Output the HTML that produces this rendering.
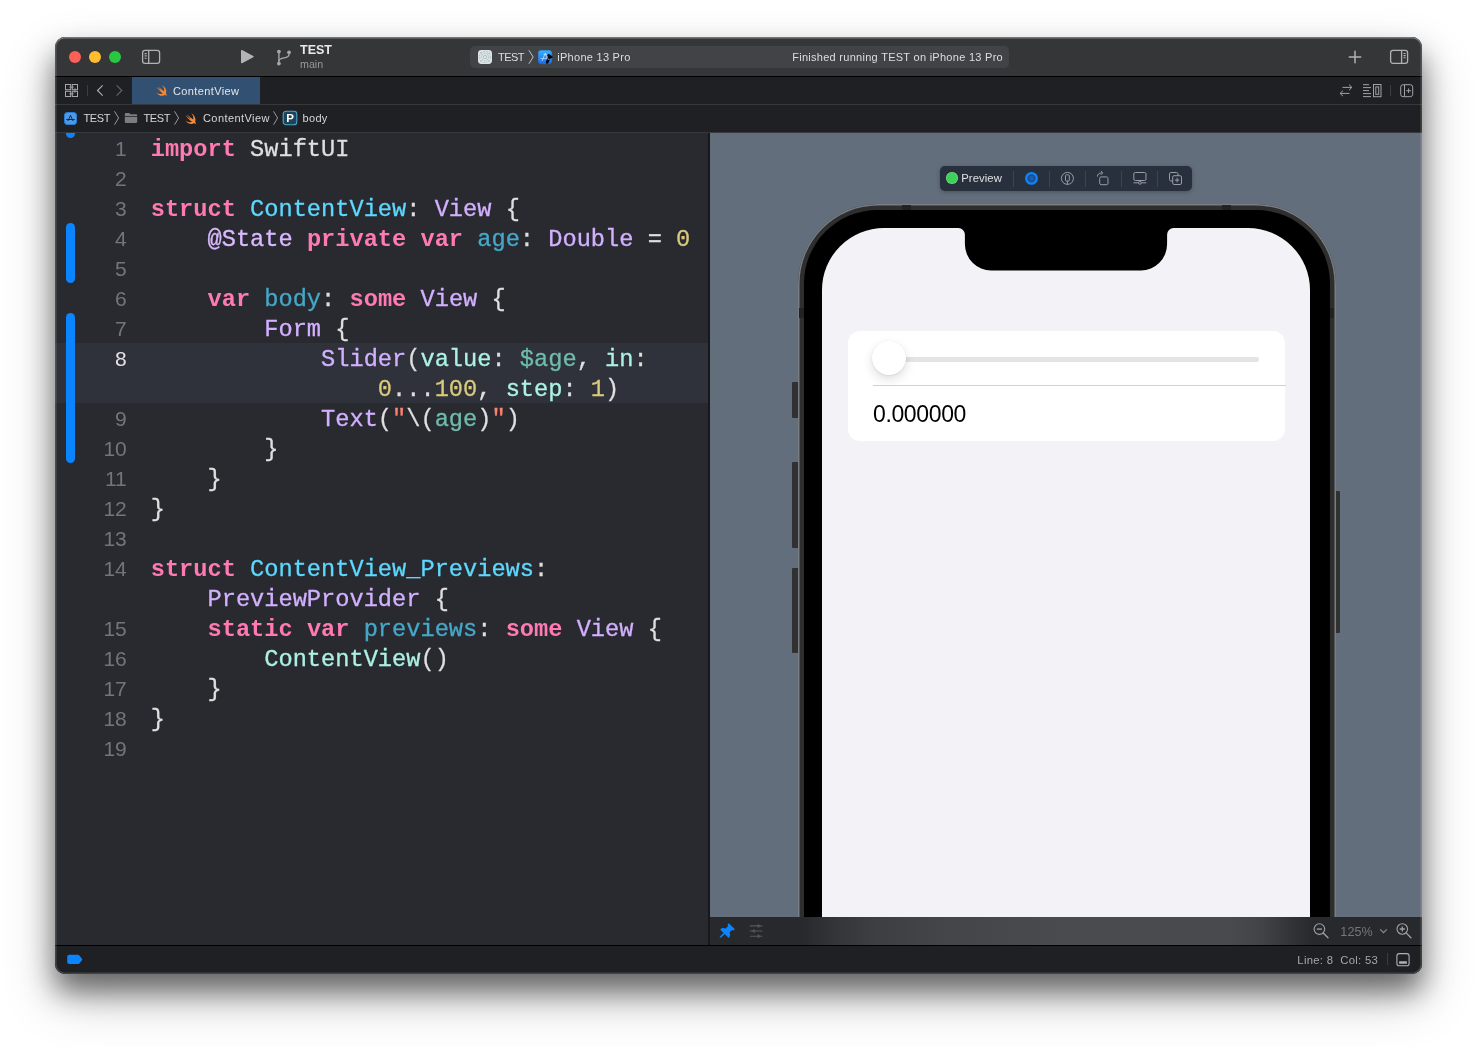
<!DOCTYPE html>
<html lang="en">
<head>
<meta charset="utf-8">
<title>Xcode – ContentView.swift</title>
<style>
*{box-sizing:border-box;margin:0;padding:0}
html,body{width:1478px;height:1047px;overflow:hidden;background:#fff}
body{position:relative;font-family:"Liberation Sans",sans-serif;-webkit-font-smoothing:antialiased}
.abs{position:absolute}
#shadow{position:absolute;left:55px;top:37.200px;width:1367.400px;height:936.300px;border-radius:10px;
  box-shadow:0 18px 28px rgba(0,0,0,.5),0 24px 54px rgba(0,0,0,.23)}
#win{position:absolute;left:55px;top:37px;width:1367.400px;height:936.500px;border-radius:10px;overflow:hidden;background:#292a30}
#pg{position:absolute;left:-55px;top:-37px;width:1478px;height:1047px;will-change:transform}
#winedge{position:absolute;inset:0;border-radius:10px;box-shadow:inset 0 0 0 1.600px rgba(255,255,255,.16),inset 0 1.500px 0 rgba(255,255,255,.2);pointer-events:none}
.t{white-space:nowrap}
.cr{top:110.5px;font-size:11px;color:#d6d6d8;line-height:15px}
#code{left:55px;top:134.500px;width:653px;font-family:"Liberation Mono",monospace;font-size:23.67px;line-height:30px;color:#dfdfe0}
.row{height:30px;white-space:pre;position:relative}
.ln{position:absolute;left:0;width:71.800px;text-align:right;font-family:"Liberation Sans",sans-serif;font-size:21px;color:#73757c;top:-1px}
.ln.cur{color:#e4e4e6}
.cd{position:absolute;left:95.700px;top:0;-webkit-text-stroke:.3px}
.cd .k{-webkit-text-stroke:0}
.k{color:#ff7ab2;font-weight:bold}.ty{color:#d3b0ff}.at{color:#dabaff}.d{color:#5dd8ff}.v{color:#45a8c8}.n{color:#d9c97c}.a{color:#acf2e4}.i{color:#6fbcab}.s{color:#ff8170}.c{color:#acf2e4}
.bar{left:11px;width:9px;border-radius:4.500px;background:#0a84ff}
#phone{left:0;top:0;width:712px;height:784px}
.ant{background:#222223}
.btn{background:#313132;border-radius:1px}
#frame{left:87.700px;top:70.500px;width:537.900px;height:1100px;border-radius:80px;background:#2e2e2f;box-shadow:inset 0 0 0 1.500px #797c80}
#bezel{left:94.300px;top:77px;width:525.300px;height:1090px;border-radius:73.500px;background:#000}
#screen{left:112.400px;top:95.200px;width:487.700px;height:1055px;border-radius:62px;background:#f2f2f7;overflow:hidden}
#card{left:25.200px;top:102.700px;width:437.400px;height:109.800px;border-radius:12px;background:#fff}
.tl{top:51px;width:12px;height:12px;border-radius:50%}
#toolbar{left:55px;top:37px;width:1368px;height:39px;background:#353638}
#tbline{left:55px;top:76px;width:1368px;height:1px;background:#000}
#tabbar{left:55px;top:77px;width:1368px;height:27px;background:#1f2023}
#tabline{left:55px;top:104px;width:1368px;height:1px;background:#37383b}
#crumbs{left:55px;top:105px;width:1368px;height:27px;background:#1f2023}
#crumbline{left:55px;top:132px;width:1368px;height:1px;background:#38393c}
#editor{left:55px;top:133px;width:653px;height:812px;background:#292a30}
#divider{left:708px;top:133px;width:2px;height:812px;background:#17181a}
#preview{left:710px;top:133px;width:713px;height:784px;background:#636e7d;overflow:hidden}
#pvbar{left:710px;top:917px;width:713px;height:28px;background:linear-gradient(to right,#27292d 0,#27292d 92px,#343539 126px,#3d3e41 162px,#444548 232px,#4a4b4e 356px,#494a4d 520px,#424346 552px,#323336 582px,#27292d 602px,#27292d 100%)}
#botline{left:55px;top:945px;width:1368px;height:1px;background:#000}
#status{left:55px;top:946px;width:1368px;height:28px;background:#1f2023}
</style>
</head>
<body>
<div id="shadow"></div>
<div id="win"><div id="pg">
  <!-- ===== toolbar ===== -->
  <div id="toolbar" class="abs"></div>
  <div id="tbline" class="abs"></div>
  <div class="abs tl" style="left:69px;background:#fe5f57"></div>
  <div class="abs tl" style="left:89px;background:#febc2e"></div>
  <div class="abs tl" style="left:109px;background:#28c840"></div>
  <svg class="abs" style="left:140px;top:47px" width="24" height="20" viewBox="0 0 24 20" fill="none" stroke="#b2b2b4" stroke-width="1.3">
    <rect x="2.6" y="3.3" width="17" height="13" rx="2.4"/><path d="M8.7 3.3v13"/>
    <path d="M4.6 6.6h2.1M4.6 8.9h2.1M4.6 11.2h2.1" stroke-width="1.1"/>
  </svg>
  <svg class="abs" style="left:238px;top:46px" width="20" height="22" viewBox="0 0 20 22"><path d="M3 4.6v12c0 .6.6.9 1.1.6l11.2-6c.5-.3.5-.9 0-1.2L4.1 4c-.5-.3-1.1 0-1.1.6z" fill="#b4b4b6"/></svg>
  <svg class="abs" style="left:272px;top:46px" width="24" height="24" viewBox="0 0 24 24" fill="none" stroke="#a6a6a8" stroke-width="1.4">
    <path d="M6.9 7v10.6"/><path d="M17 7.6v1c0 2.4-2.2 2.9-4.8 3.3-2.800.4-5.300 1-5.300 3.400"/>
    <circle cx="6.9" cy="5.6" r="1.9" fill="#a6a6a8" stroke="none"/><circle cx="6.9" cy="17.6" r="1.9" fill="#a6a6a8" stroke="none"/><circle cx="17" cy="6.3" r="1.9" fill="#a6a6a8" stroke="none"/>
  </svg>
  <div class="abs t" style="left:300px;top:43px;font-size:12.5px;font-weight:bold;color:#e9e9ea;line-height:14px">TEST</div>
  <div class="abs t" style="left:300px;top:58px;font-size:10.7px;color:#98989b;line-height:13px">main</div>
  <div class="abs" style="left:470px;top:46px;width:539px;height:22px;border-radius:5px;background:#424346"></div>
  <svg class="abs" style="left:478px;top:50px" width="14" height="14" viewBox="0 0 14 14"><rect width="14" height="14" rx="3.400" fill="#dde4e6"/><g fill="none" stroke="#a7b7c0" stroke-width=".8"><circle cx="7" cy="7" r="1.700"/><circle cx="7" cy="7" r="3.700" stroke-dasharray="1.600 1"/><circle cx="7" cy="7" r="5.600" stroke-dasharray="1.800 1.200"/><path d="M2 2l2.600 2.600M12 2L9.400 4.600M2 12l2.600-2.600M12 12L9.400 9.400" stroke-width=".6"/></g></svg>
  <div class="abs t" style="left:498px;top:50px;font-size:11px;letter-spacing:-.55px;color:#dededf;line-height:14px">TEST</div>
  <svg class="abs" style="left:526.600px;top:49px" width="9" height="16" viewBox="0 0 9 16" fill="none" stroke="#c4c4c6" stroke-width="1"><path d="M1.9 1.300l4.300 6.700-4.300 6.700"/></svg>
  <svg class="abs" style="left:538px;top:50px" width="15" height="15" viewBox="0 0 15 15"><defs><linearGradient id="xg" x1="0" y1="0" x2="0" y2="1"><stop offset="0" stop-color="#35b2fb"/><stop offset="1" stop-color="#1a6cf0"/></linearGradient></defs><rect x=".2" y=".2" width="13.600" height="13.600" rx="3.300" fill="url(#xg)" stroke="#2a86e0" stroke-width=".4"/><path d="M7.300 3.200L4.200 10.700M7.300 3.200l1.800 4.600M2.800 8.600h6.400M5.900 4.600h2.600" stroke="#cfe6ff" stroke-width=".7" fill="none" stroke-linecap="round"/><path d="M11.800 6.600L9.100 12.300" stroke="#08080a" stroke-width="2.700" stroke-linecap="round"/><path d="M10.700 5.300l2.500 1.700" stroke="#08080a" stroke-width="2.600" stroke-linecap="round"/><path d="M9.700 8.800l1.900.8" stroke="#dfe3e8" stroke-width=".7"/></svg>
  <div class="abs t" style="left:557.300px;top:50px;font-size:11px;letter-spacing:.27px;color:#dededf;line-height:14px">iPhone 13 Pro</div>
  <div class="abs t" style="left:700px;width:303px;text-align:right;top:50px;font-size:11px;letter-spacing:.28px;color:#dededf;line-height:14px">Finished running TEST on iPhone 13 Pro</div>
  <svg class="abs" style="left:1347px;top:49px" width="16" height="16" viewBox="0 0 16 16" stroke="#b2b2b4" stroke-width="1.5" stroke-linecap="round"><path d="M8 2.3v11.4M2.3 8h11.4"/></svg>
  <svg class="abs" style="left:1387px;top:47px" width="24" height="20" viewBox="0 0 24 20" fill="none" stroke="#b2b2b4" stroke-width="1.3">
    <rect x="3.6" y="3.3" width="17" height="13" rx="2.4"/><path d="M14.6 3.3v13"/>
    <path d="M16.5 6.5h2.2M16.5 8.6h2.2M16.5 10.7h2.2" stroke-width="1.1"/>
  </svg>

  <!-- ===== tab bar ===== -->
  <div id="tabbar" class="abs"></div>
  <div id="tabline" class="abs"></div>
  <div class="abs" style="left:132px;top:77px;width:128px;height:27px;background:#325172"></div>


  <svg class="abs" style="left:65px;top:84px" width="13" height="13" viewBox="0 0 13 13" fill="none" stroke="#a6a6a8" stroke-width="1"><rect x=".5" y=".5" width="5.200" height="5.200"/><rect x="7.300" y=".5" width="5.200" height="5.200"/><rect x=".5" y="7.300" width="5.200" height="5.200"/><rect x="7.300" y="7.300" width="5.200" height="5.200"/><path d="M4.300 3.100h4.400M4.300 9.900h4.400M9.900 4.300v4.400" stroke-width=".9"/></svg>
  <div class="abs" style="left:87px;top:85px;width:1px;height:11px;background:#3d3d40"></div>
  <svg class="abs" style="left:95px;top:83px" width="10" height="15" viewBox="0 0 10 15" fill="none" stroke="#b0b0b2" stroke-width="1.1"><path d="M7.700 2.300L2.500 7.500l5.200 5.200"/></svg>
  <svg class="abs" style="left:114px;top:83px" width="10" height="15" viewBox="0 0 10 15" fill="none" stroke="#66666a" stroke-width="1.1"><path d="M2.600 2.300l5.200 5.200-5.200 5.200"/></svg>
<svg class="abs" style="left:155.300px;top:85.300px" width="12.400" height="11.400" viewBox="0 0 26 24"><path fill="#f0883a" d="M15.200.6c6.800 4.300 10.300 11.700 7.700 16.900 1.800 2.300 1.700 4.500 1.400 5.700-1.500-2.600-3.800-2.400-5.200-1.700-4.200 2.300-11.300 1.400-16.500-5.900 4.200 3.200 9.800 4.800 13.700 2.300C10.800 13.700 5.700 8 3.300 4.400c3.200 2.800 8.300 6.800 10.200 7.800C11.200 9.700 7.700 5.200 6.600 3.300c3.600 3.300 8.700 7.900 12.100 9.900C20.300 9.400 18.400 4.600 15.200.6z"/></svg>
  <div class="abs t" style="left:173px;top:83.700px;font-size:11px;letter-spacing:.38px;color:#e3e6ea;line-height:15px">ContentView</div>
  <svg class="abs" style="left:1338px;top:83px" width="16" height="15" viewBox="0 0 16 15" fill="none" stroke="#a2a2a4" stroke-width="1"><path d="M4.500 4.400h9.300M11 1.600l2.900 2.800L11 7.200"/><path d="M11.500 10.400H2.200M5 7.600L2.100 10.400 5 13.200"/></svg>
  <svg class="abs" style="left:1362px;top:83px" width="21" height="15" viewBox="0 0 21 15" fill="none" stroke="#a2a2a4" stroke-width="1"><path d="M1 1.700h6M1 4.600h8M1 7.600h6M1 10.600h8M1 13.600h8"/><rect x="11.500" y="1.500" width="7.500" height="12.200"/><rect x="13.800" y="3.900" width="2.900" height="7.400"/></svg>
  <div class="abs" style="left:1390px;top:85px;width:1px;height:11px;background:#3d3d40"></div>
  <svg class="abs" style="left:1399px;top:83px" width="15" height="15" viewBox="0 0 15 15" fill="none" stroke="#a2a2a4" stroke-width="1"><rect x="1.700" y="1.700" width="12" height="12" rx="2.400"/><path d="M5.500 1.700v12"/><path d="M9.600 5.400v4.600M7.300 7.700h4.600"/></svg>
  <!-- ===== breadcrumbs ===== -->
  <div id="crumbs" class="abs"></div>
  <div id="crumbline" class="abs"></div>


  <svg class="abs" style="left:64px;top:112px" width="13" height="13" viewBox="0 0 13 13"><rect x=".5" y=".5" width="12" height="12" rx="2.800" fill="#4b9bea" stroke="#2b7cd3"/><path d="M6.500 3.400L4 8.800M6.500 3.400L9 8.800M2.700 7.500h7.600" stroke="#1c2a40" stroke-width="1" fill="none" stroke-linecap="round"/></svg>
  <div class="abs t cr" style="left:83.500px;letter-spacing:-.4px">TEST</div>
<svg class="abs" style="left:113px;top:110px" width="8" height="16" viewBox="0 0 8 16" fill="none" stroke="#9a9a9e" stroke-width="1"><path d="M1.500 1.300l4.100 6.700-4.100 6.700"/></svg>
  <svg class="abs" style="left:124px;top:112px" width="14" height="12" viewBox="0 0 14 12"><path d="M.8 2.200c0-.7.500-1.200 1.200-1.200h3.200l1.300 1.300h5.500c.7 0 1.200.5 1.200 1.200v.7H.8z" fill="#7b7e81"/><path d="M.8 4.900h12.400v4.900c0 .7-.5 1.200-1.200 1.200H2c-.7 0-1.200-.5-1.200-1.200z" fill="#7b7e81"/></svg>
  <div class="abs t cr" style="left:143.500px;letter-spacing:-.4px">TEST</div>
<svg class="abs" style="left:173px;top:110px" width="8" height="16" viewBox="0 0 8 16" fill="none" stroke="#9a9a9e" stroke-width="1"><path d="M1.500 1.300l4.100 6.700-4.100 6.700"/></svg><svg class="abs" style="left:184.300px;top:112.600px" width="12.600" height="11.600" viewBox="0 0 26 24"><path fill="#f0883a" d="M15.200.6c6.800 4.300 10.300 11.700 7.700 16.900 1.800 2.300 1.700 4.500 1.400 5.700-1.500-2.600-3.800-2.400-5.200-1.700-4.200 2.300-11.300 1.400-16.500-5.900 4.200 3.200 9.800 4.800 13.700 2.300C10.800 13.700 5.700 8 3.300 4.400c3.200 2.800 8.300 6.800 10.200 7.800C11.200 9.700 7.700 5.200 6.600 3.300c3.600 3.300 8.700 7.900 12.100 9.900C20.300 9.400 18.400 4.600 15.200.6z"/></svg>
  <div class="abs t cr" style="left:203px;letter-spacing:.42px">ContentView</div>
<svg class="abs" style="left:272px;top:110px" width="8" height="16" viewBox="0 0 8 16" fill="none" stroke="#9a9a9e" stroke-width="1"><path d="M1.500 1.300l4.100 6.700-4.100 6.700"/></svg>
  <svg class="abs" style="left:282px;top:110px" width="16" height="16" viewBox="0 0 16 16"><rect x="1.200" y="1.200" width="13.600" height="13.600" rx="2.800" fill="#1d4358" stroke="#4aa6cf" stroke-width="1.100"/></svg>
  <div class="abs t" style="left:282px;top:110px;width:16px;text-align:center;font-size:11.500px;font-weight:bold;color:#fff;line-height:16px">P</div>
  <div class="abs t cr" style="left:302.500px;letter-spacing:.32px">body</div>
  <!-- ===== editor / preview ===== -->
  <div id="editor" class="abs"></div>
  <div class="abs" style="left:55px;top:343px;width:653px;height:60px;background:#2f323a"></div>
  <div class="abs" style="left:55px;top:133px;width:40px;height:812px;overflow:hidden">
    <div class="abs bar" style="top:-8px;height:12.500px"></div>
    <div class="abs bar" style="top:90px;height:60px"></div>
    <div class="abs bar" style="top:180px;height:150px"></div>
  </div>
  <div id="code" class="abs">
<div class="row"><span class="ln">1</span><span class="cd"><span class="k">import</span> SwiftUI</span></div>
<div class="row"><span class="ln">2</span><span class="cd"></span></div>
<div class="row"><span class="ln">3</span><span class="cd"><span class="k">struct</span> <span class="d">ContentView</span>: <span class="ty">View</span> {</span></div>
<div class="row"><span class="ln">4</span><span class="cd">    <span class="at">@State</span> <span class="k">private</span> <span class="k">var</span> <span class="v">age</span>: <span class="ty">Double</span> = <span class="n">0</span></span></div>
<div class="row"><span class="ln">5</span><span class="cd"></span></div>
<div class="row"><span class="ln">6</span><span class="cd">    <span class="k">var</span> <span class="v">body</span>: <span class="k">some</span> <span class="ty">View</span> {</span></div>
<div class="row"><span class="ln">7</span><span class="cd">        <span class="ty">Form</span> {</span></div>
<div class="row"><span class="ln cur">8</span><span class="cd">            <span class="ty">Slider</span>(<span class="a">value</span>: <span class="i">$age</span>, <span class="a">in</span>:</span></div>
<div class="row"><span class="ln"></span><span class="cd">                <span class="n">0</span>...<span class="n">100</span>, <span class="a">step</span>: <span class="n">1</span>)</span></div>
<div class="row"><span class="ln">9</span><span class="cd">            <span class="ty">Text</span>(<span class="s">"</span>\(<span class="i">age</span>)<span class="s">"</span>)</span></div>
<div class="row"><span class="ln">10</span><span class="cd">        }</span></div>
<div class="row"><span class="ln">11</span><span class="cd">    }</span></div>
<div class="row"><span class="ln">12</span><span class="cd">}</span></div>
<div class="row"><span class="ln">13</span><span class="cd"></span></div>
<div class="row"><span class="ln">14</span><span class="cd"><span class="k">struct</span> <span class="d">ContentView_Previews</span>:</span></div>
<div class="row"><span class="ln"></span><span class="cd">    <span class="ty">PreviewProvider</span> {</span></div>
<div class="row"><span class="ln">15</span><span class="cd">    <span class="k">static</span> <span class="k">var</span> <span class="v">previews</span>: <span class="k">some</span> <span class="ty">View</span> {</span></div>
<div class="row"><span class="ln">16</span><span class="cd">        <span class="c">ContentView</span>()</span></div>
<div class="row"><span class="ln">17</span><span class="cd">    }</span></div>
<div class="row"><span class="ln">18</span><span class="cd">}</span></div>
<div class="row"><span class="ln">19</span><span class="cd"></span></div>
  </div>
  <div id="divider" class="abs"></div>
  <div id="preview" class="abs">
    <!-- preview toolbar pill (coords relative to #preview: page - 710, page - 133) -->
    <div class="abs" style="left:230px;top:33px;width:252px;height:25px;border-radius:5px;background:#28303d;box-shadow:0 1px 4px rgba(0,0,0,.28)">
      <div class="abs" style="left:6px;top:6.400px;width:12px;height:12px;border-radius:50%;background:#3dd158;box-shadow:inset 0 0 0 .6px rgba(255,255,255,.35)"></div>
      <div class="abs t" style="left:21.200px;top:5px;font-size:11.300px;letter-spacing:.08px;color:#dfe0e2;line-height:15px">Preview</div>
      <div class="abs" style="left:73px;top:4.500px;width:1px;height:16px;background:#3c4452"></div>
      <svg class="abs" style="left:83px;top:4px" width="17" height="17" viewBox="0 0 17 17"><circle cx="8.500" cy="8.400" r="5.300" fill="#1b4f95" stroke="#0a84ff" stroke-width="2.300"/><rect x="6.600" y="6.500" width="3.800" height="3.800" fill="#1a60b6"/></svg>
      <div class="abs" style="left:109px;top:4.500px;width:1px;height:16px;background:#3c4452"></div>
      <svg class="abs" style="left:119px;top:4px" width="17" height="17" viewBox="0 0 17 17" fill="none" stroke="#989ea8" stroke-width="1"><circle cx="8.400" cy="8.400" r="6"/><rect x="6.500" y="4.800" width="3.800" height="6.200" rx=".9"/><path d="M8.400 11v3.300"/></svg>
      <div class="abs" style="left:145px;top:4.500px;width:1px;height:16px;background:#3c4452"></div>
      <svg class="abs" style="left:154px;top:3px" width="18" height="18" viewBox="0 0 18 18" fill="none" stroke="#989ea8" stroke-width="1"><rect x="5.700" y="7.900" width="8.300" height="7.800" rx="1.500"/><path d="M3.500 7.600c0-2.400 1.500-3.700 4.300-3.700"/><path d="M6.900 2l1.900 1.900-1.900 1.900" /></svg>
      <div class="abs" style="left:181px;top:4.500px;width:1px;height:16px;background:#3c4452"></div>
      <svg class="abs" style="left:191px;top:4px" width="18" height="17" viewBox="0 0 18 17" fill="none" stroke="#989ea8" stroke-width="1"><rect x="2.800" y="2.500" width="12.200" height="8" rx="1.500"/><path d="M2.500 12.800h4.800M10.500 12.800h4.800"/><circle cx="8.900" cy="12.800" r="1.400"/></svg>
      <div class="abs" style="left:217px;top:4.500px;width:1px;height:16px;background:#3c4452"></div>
      <svg class="abs" style="left:227px;top:4px" width="17" height="17" viewBox="0 0 17 17" fill="none" stroke="#989ea8" stroke-width="1"><path d="M5.700 11H3.900c-.8 0-1.400-.6-1.400-1.400V3.900c0-.8.600-1.400 1.400-1.400h5.700c.8 0 1.400.6 1.400 1.400v1.800"/><rect x="5.700" y="5.700" width="8.800" height="8.800" rx="1.400"/><path d="M10.100 7.900v4.400M7.900 10.100h4.400"/></svg>
    </div>
    <!-- iPhone -->
    <div id="phone" class="abs">
      <!-- side buttons (preview-relative coords) -->
      <div class="abs btn" style="left:81.600px;top:249px;width:7px;height:36px"></div>
      <div class="abs btn" style="left:81.600px;top:329.300px;width:7px;height:85.500px"></div>
      <div class="abs btn" style="left:81.600px;top:434.600px;width:7px;height:85.500px"></div>
      <div class="abs btn" style="left:624px;top:358px;width:5.700px;height:142.300px"></div>
      <div id="frame" class="abs"></div>
      <div class="abs ant" style="left:192px;top:72px;width:9px;height:5.200px"></div>
      <div class="abs ant" style="left:511.600px;top:72px;width:9px;height:5.200px"></div>
      <div class="abs ant" style="left:89.200px;top:174.600px;width:5.200px;height:10px"></div>
      <div class="abs ant" style="left:619.400px;top:174.600px;width:5px;height:10px"></div>
      <div id="bezel" class="abs"></div>
      <div id="screen" class="abs">
        <svg class="abs" style="left:127.900px;top:-1px" width="232" height="46" viewBox="0 0 232 46"><path d="M0 0h232v1h-8.400a6.500 6.500 0 0 0-6.500 6.500V17.100a26.300 26.300 0 0 1-26.300 26.300H41.200A26.300 26.300 0 0 1 14.900 17.100V7.500A6.500 6.500 0 0 0 8.400 1H0z" fill="#000"/></svg>
        <div id="card" class="abs">
          <div class="abs" style="left:30px;top:26px;width:381px;height:5.200px;border-radius:2.600px;background:#e4e4e6"></div>
          <div class="abs" style="left:24.700px;top:10.400px;width:33.800px;height:33.800px;border-radius:50%;background:#fff;box-shadow:0 4.500px 11px rgba(0,0,0,.13),0 .5px 2px rgba(0,0,0,.1)"></div>
          <div class="abs" style="left:25px;top:54px;width:413px;height:.700px;background:#d2d2d5"></div>
          <div class="abs t" style="left:25.400px;top:70.600px;font-size:23px;letter-spacing:-.36px;line-height:26px;color:#000">0.000000</div>
        </div>
      </div>
    </div>
  </div>
  <div id="pvbar" class="abs"></div>
  <svg class="abs" style="left:716px;top:920px" width="22" height="22" viewBox="0 0 22 22"><g transform="translate(9.700 11.900) scale(1.1) rotate(45)"><path fill="#0a84ff" d="M-3.300-7.600h6.600c.6 0 1 .4 1 .9 0 .5-.3.900-.8 1.100l-.7.300v3.100c1.700.8 3 2.100 3 3.500v.1c0 .3-.3.600-.6.600H.7v4.100L0 8l-.7-1.900V2H-4.600c-.3 0-.6-.3-.6-.6v-.1c0-1.400 1.300-2.700 3-3.500V-5.300l-.7-.3c-.5-.2-.8-.6-.8-1.100 0-.5.400-.9 1-.9z"/></g></svg>
  <svg class="abs" style="left:748px;top:922px" width="16" height="18" viewBox="0 0 16 18" fill="none" stroke="#56585c" stroke-width="1.100"><path d="M1.800 3.900h12.600M1.800 9h12.600M1.800 14.200h12.600"/><path d="M10 2.400l2.200 1.500L10 5.400zM6.400 7.500L4.200 9l2.200 1.500zM10 12.700l2.200 1.500-2.200 1.500z" fill="#56585c" stroke-width=".8"/></svg>
  <svg class="abs" style="left:1311px;top:921px" width="20" height="20" viewBox="0 0 20 20" fill="none" stroke="#a0a2a5" stroke-width="1.100"><circle cx="8.400" cy="8.100" r="5.300"/><path d="M12.200 12l4.800 4.800" stroke-width="1.300" stroke-linecap="round"/><path d="M5.800 8.100h5.200" stroke-width="1.300"/></svg>
  <div class="abs t" style="left:1340.300px;top:924px;font-size:12.600px;letter-spacing:.1px;color:#74767a;line-height:16px">125%</div>
  <svg class="abs" style="left:1378px;top:926px" width="11" height="10" viewBox="0 0 11 10" fill="none" stroke="#8a8c90" stroke-width="1.200"><path d="M2.200 3.300l3.300 3.300 3.300-3.300"/></svg>
  <svg class="abs" style="left:1394px;top:921px" width="20" height="20" viewBox="0 0 20 20" fill="none" stroke="#a0a2a5" stroke-width="1.100"><circle cx="8.300" cy="8" r="5.300"/><path d="M12.100 11.900l4.800 4.800" stroke-width="1.300" stroke-linecap="round"/><path d="M5.700 8h5.200M8.300 5.400v5.200" stroke-width="1.300"/></svg>
  <div id="botline" class="abs"></div>
  <div id="status" class="abs"></div>
  <svg class="abs" style="left:66px;top:953px" width="18" height="12" viewBox="0 0 18 12"><path fill="#0a84ff" d="M3.200 1.800h8.700c.6 0 1.100.2 1.500.7l2.700 3.400c.3.300.3.800 0 1.100l-2.700 3.400c-.4.500-.9.700-1.500.7H3.200c-1.100 0-2-.9-2-2V3.800c0-1.100.9-2 2-2z"/></svg>
  <div class="abs t" style="left:1297.300px;top:952.500px;font-size:11.300px;letter-spacing:.3px;color:#a6a6a8;line-height:15px;white-space:pre">Line: 8  Col: 53</div>
  <div class="abs" style="left:1387px;top:953px;width:1px;height:12px;background:#3c3c3f"></div>
  <svg class="abs" style="left:1395px;top:952px" width="16" height="16" viewBox="0 0 16 16" fill="none" stroke="#b0b0b2" stroke-width="1.100"><rect x="1.900" y="1.600" width="12.200" height="12.200" rx="2.400"/><rect x="4.100" y="9.300" width="7.800" height="2.400" rx=".5" fill="#b0b0b2" stroke="none"/></svg>
</div><div id="winedge"></div></div>
</body>
</html>
